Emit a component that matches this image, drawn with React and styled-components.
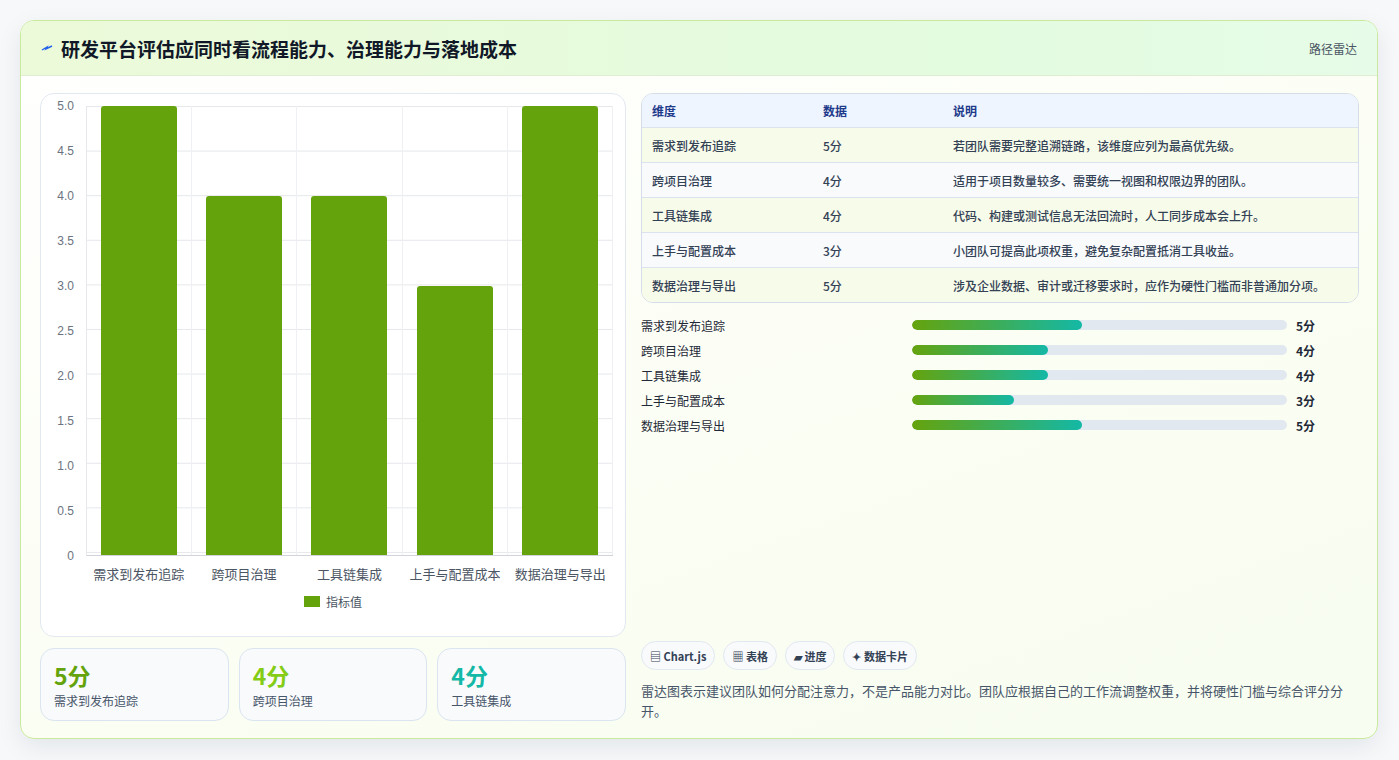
import React from 'react';
import styled, {createGlobalStyle} from 'styled-components';

const Global = createGlobalStyle`
  body { margin: 0; background: #f6f8fa; font-family: "Noto Sans CJK SC", "Noto Sans", sans-serif; }
  * { box-sizing: border-box; }
`;

const data = [
  {name: '需求到发布追踪', v: 5, note: '若团队需要完整追溯链路，该维度应列为最高优先级。'},
  {name: '跨项目治理', v: 4, note: '适用于项目数量较多、需要统一视图和权限边界的团队。'},
  {name: '工具链集成', v: 4, note: '代码、构建或测试信息无法回流时，人工同步成本会上升。'},
  {name: '上手与配置成本', v: 3, note: '小团队可提高此项权重，避免复杂配置抵消工具收益。'},
  {name: '数据治理与导出', v: 5, note: '涉及企业数据、审计或迁移要求时，应作为硬性门槛而非普通加分项。'},
];

const Page = styled.div`
  padding: 20px 21px 21px 20px;
`;
const Card = styled.div`
  height: 719px;
  border: 1px solid #c9ea9c;
  border-radius: 14px;
  background: linear-gradient(160deg, #ffffff 0%, #fbfef3 60%, #f7fdf0 100%);
  box-shadow: 0 8px 24px rgba(15, 23, 42, 0.08);
  overflow: hidden;
  display: flex;
  flex-direction: column;
`;
const Header = styled.div`
  height: 55px;
  flex: none;
  display: flex;
  align-items: center;
  justify-content: space-between;
  padding: 0 20px;
  background: linear-gradient(90deg, #ecfad9, #e3fbdf 70%, #e6fce8);
  border-bottom: 1px solid #dfeed2;
`;
const Title = styled.h1`
  margin: 0;
  font-size: 19px;
  font-weight: 700;
  color: #111827;
  display: flex;
  align-items: center;
  gap: 8px;
`;
const Tag = styled.span`
  font-size: 12px;
  color: #4b5563;
`;
const Body = styled.div`
  flex: 1;
  display: grid;
  grid-template-columns: 586px 1fr;
  gap: 15px;
  padding: 17px 18px 18px 19px;
`;
const Col = styled.div`
  display: flex;
  flex-direction: column;
  gap: 11px;
  min-height: 0;
`;
const ChartBox = styled.div`
  height: 544px;
  background: #fff;
  border: 1px solid #e2e8f0;
  border-radius: 14px;
  padding: 12px 12px 0 12px;
`;
const Plot = styled.div`
  display: grid;
  grid-template-columns: 33px 1fr;
  height: 450px;
`;
const YAxis = styled.div`
  position: relative;
  font-size: 12px;
  color: #6b7280;
  font-family: "Liberation Sans", sans-serif;
`;
const YTick = styled.span`
  position: absolute;
  right: 12px;
  transform: translateY(-50%);
`;
const Grid = styled.div`
  position: relative;
  display: grid;
  grid-template-columns: repeat(5, 1fr);
  border-left: 1px solid #e5e7eb;
  border-bottom: 1px solid #d1d5db;
  background-image: linear-gradient(#e5e7eb 1px, transparent 1px);
  background-size: 100% 44.6px;
`;
const Slot = styled.div`
  display: flex;
  align-items: flex-end;
  justify-content: center;
  border-right: 1px solid #eef0f3;
`;
const Bar = styled.div`
  width: 76px;
  background: #65a30d;
  border-radius: 3px 3px 0 0;
`;
const XLabels = styled.div`
  margin-left: 33px;
  display: grid;
  grid-template-columns: repeat(5, 1fr);
  font-size: 13px;
  color: #4b5563;
  text-align: center;
  padding-top: 8px;
  white-space: nowrap;
`;
const Legend = styled.div`
  display: flex;
  justify-content: center;
  align-items: center;
  gap: 6px;
  font-size: 12px;
  color: #4b5563;
  margin-top: 10px;
`;
const Swatch = styled.span`
  width: 16px;
  height: 11px;
  background: #65a30d;
`;
const Stats = styled.div`
  display: grid;
  grid-template-columns: repeat(3, 1fr);
  gap: 10px;
`;
const Stat = styled.div`
  height: 73px;
  border: 1px solid #dbe5f0;
  border-radius: 14px;
  background: #f8fafc;
  padding: 11px 13px;
`;
const StatNum = styled.div`
  font-size: 23px;
  font-weight: 700;
  color: ${p => p.c};
  line-height: 30px;
`;
const StatLabel = styled.div`
  font-size: 12px;
  color: #475569;
  margin-top: 2px;
`;
const Table = styled.div`
  border: 1px solid #d5dde8;
  border-radius: 12px;
  overflow: hidden;
  font-size: 12px;
`;
const Row = styled.div`
  display: grid;
  grid-template-columns: 171px 130px 1fr;
  align-items: center;
  height: ${p => (p.head ? 33 : 35)}px;
  padding: 0 10px;
  background: ${p => (p.head ? '#eef5ff' : p.alt ? '#f8fafc' : '#f7fbea')};
  color: ${p => (p.head ? '#1e3a8a' : '#334155')};
  font-weight: ${p => (p.head ? 600 : 500)};
  border-top: ${p => (p.head ? 'none' : '1px solid #dbe3ee')};
`;
const Bars = styled.div`
  display: flex;
  flex-direction: column;
  gap: 7px;
  margin-top: 2px;
`;
const BarRow = styled.div`
  display: grid;
  grid-template-columns: 271px 375px 1fr;
  gap: 0;
  align-items: center;
  font-size: 12px;
  color: #1f2937;
  height: 18px;
`;
const Track = styled.div`
  height: 10px;
  border-radius: 5px;
  background: #e2e8f0;
  overflow: hidden;
`;
const Fill = styled.div`
  height: 100%;
  border-radius: 5px;
  background: linear-gradient(90deg, #65a30d, #14b8a6);
`;
const Val = styled.span`
  padding-left: 9px;
  font-weight: 700;
`;
const Spacer = styled.div`
  flex: 1;
`;
const Chips = styled.div`
  display: flex;
  gap: 8px;
`;
const Chip = styled.span`
  height: 29px;
  padding: 0 8px;
  border: 1px solid #e2e8f0;
  border-radius: 15px;
  background: #f8fafc;
  display: flex;
  align-items: center;
  gap: 3px;
  font-size: 11px;
  font-weight: 600;
  color: #334155;
`;
const Note = styled.p`
  margin: 0;
  font-size: 13px;
  line-height: 20px;
  color: #475569;
`;

const ticks = [5, 4.5, 4, 3.5, 3, 2.5, 2, 1.5, 1, 0.5, 0];

export default function App() {
  return (
    <Page>
      <Global />
      <Card>
        <Header>
          <Title>
            <svg width="12" height="8" viewBox="0 0 12 8"><path d="M1 6 L6 3 L5 5 L11 2" stroke="#2563eb" strokeWidth="1.4" fill="none" /></svg>
            研发平台评估应同时看流程能力、治理能力与落地成本
          </Title>
          <Tag>路径雷达</Tag>
        </Header>
        <Body>
          <Col>
            <ChartBox>
              <Plot>
                <YAxis>
                  {ticks.map((t, i) => (
                    <YTick key={t} style={{top: `${i * 10}%`}}>{t === 0 ? '0' : t.toFixed(1)}</YTick>
                  ))}
                </YAxis>
                <Grid>
                  {data.map(d => (
                    <Slot key={d.name}>
                      <Bar style={{height: `${(d.v / 5) * 100}%`}} />
                    </Slot>
                  ))}
                </Grid>
              </Plot>
              <XLabels>
                {data.map(d => <span key={d.name}>{d.name}</span>)}
              </XLabels>
              <Legend><Swatch />指标值</Legend>
            </ChartBox>
            <Stats>
              {[['5分', '需求到发布追踪', '#65a30d'], ['4分', '跨项目治理', '#84cc16'], ['4分', '工具链集成', '#14b8a6']].map(([n, l, c]) => (
                <Stat key={l}>
                  <StatNum c={c}>{n}</StatNum>
                  <StatLabel>{l}</StatLabel>
                </Stat>
              ))}
            </Stats>
          </Col>
          <Col>
            <Table>
              <Row head><span>维度</span><span>数据</span><span>说明</span></Row>
              {data.map((d, i) => (
                <Row key={d.name} alt={i % 2 === 1}>
                  <span>{d.name}</span><span>{d.v}分</span><span>{d.note}</span>
                </Row>
              ))}
            </Table>
            <Bars>
              {data.map(d => (
                <BarRow key={d.name}>
                  <span>{d.name}</span>
                  <Track><Fill style={{width: `${d.v * 9.07}%`}} /></Track>
                  <Val>{d.v}分</Val>
                </BarRow>
              ))}
            </Bars>
            <Spacer />
            <Chips>
              <Chip>▤ Chart.js</Chip>
              <Chip>▦ 表格</Chip>
              <Chip>▰ 进度</Chip>
              <Chip>✦ 数据卡片</Chip>
            </Chips>
            <Note>雷达图表示建议团队如何分配注意力，不是产品能力对比。团队应根据自己的工作流调整权重，并将硬性门槛与综合评分分开。</Note>
          </Col>
        </Body>
      </Card>
    </Page>
  );
}
